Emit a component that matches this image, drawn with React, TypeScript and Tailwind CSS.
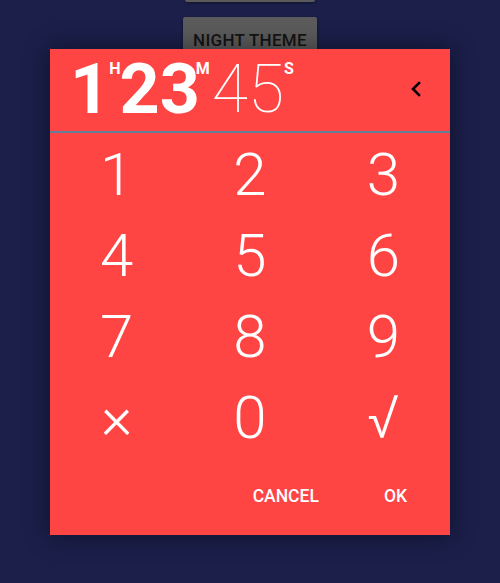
import React from "react";

const keys = ["1", "2", "3", "4", "5", "6", "7", "8", "9", "×", "0", "√"];

export default function App() {
  return (
    <div
      className="relative w-[500px] h-[583px] overflow-hidden bg-[#1b1f4a] flex flex-col items-center"
      style={{ fontFamily: "Roboto, 'Liberation Sans', sans-serif" }}
    >
      <div className="mt-[-34px] w-[130px] h-[36px] rounded-[2px] bg-[#5b5b5b] shadow-[0_1px_3px_rgba(0,0,0,0.4)]" />
      <div className="mt-[15px] w-[134px] h-[40px] rounded-[2px] bg-[#5b5b5b] shadow-[0_1px_3px_rgba(0,0,0,0.4)] flex justify-center pt-[15px]">
        <span className="text-[17px] leading-none font-medium text-[#141414] tracking-[0.3px]">
          NIGHT THEME
        </span>
      </div>

      <div className="absolute left-[50px] top-[49px] w-[400px] h-[486px] bg-[#ff4444] shadow-[0_0_24px_rgba(0,0,0,0.45)] flex flex-col">
        <div className="h-[82px] flex items-start pl-[20px] pr-[28px] pt-[5px] text-white">
          <span className="text-[70px] leading-[70px] font-bold">1</span>
          <span className="text-[16px] leading-none font-bold mt-[7px] ml-[-1px] mr-[-1px]">H</span>
          <span className="text-[70px] leading-[70px] font-bold">23</span>
          <span className="text-[16px] leading-none font-bold mt-[7px] ml-[-4px]">M</span>
          <span className="text-[66px] leading-[70px] font-thin mt-[1px] ml-[2px]">45</span>
          <span className="text-[16px] leading-none font-bold mt-[7px]">S</span>
          <div className="flex-1" />
          <svg width="12" height="16" viewBox="0 0 12 16" className="mt-[27px]">
            <path d="M9 2 L3 8 L9 14" fill="none" stroke="#000" strokeWidth="2.6" strokeLinecap="square" />
          </svg>
        </div>
        <div className="h-[2px] bg-[#5f7f9c]" />
        <div className="grid grid-cols-3 pt-[1px]">
          {keys.map((k) => (
            <div
              key={k}
              className="h-[81px] flex items-center justify-center text-white text-[60px] font-light leading-none"
            >
              {k}
            </div>
          ))}
        </div>
        <div className="flex-1 flex items-center justify-end pr-[43px] gap-[65px] text-white text-[17.5px] font-medium">
          <span>CANCEL</span>
          <span>OK</span>
        </div>
      </div>
    </div>
  );
}
